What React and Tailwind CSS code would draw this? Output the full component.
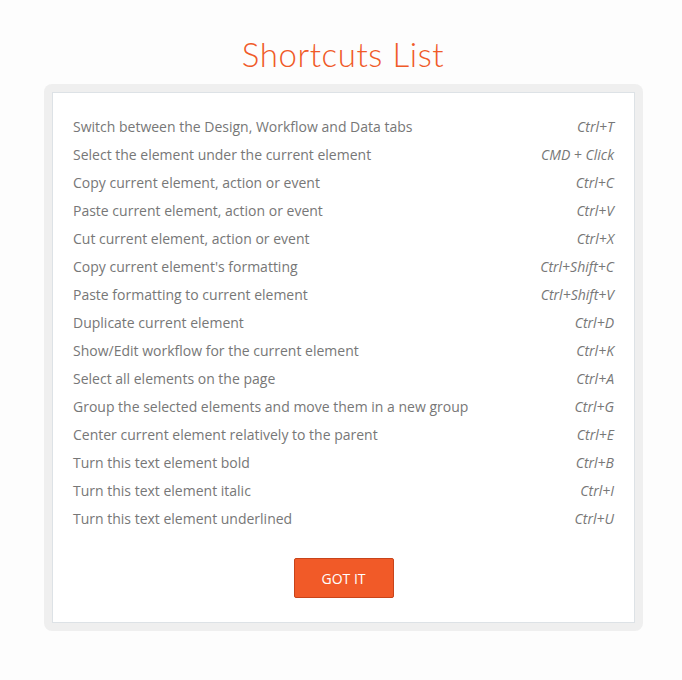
import React from 'react';

const shortcuts = [
  ['Switch between the Design, Workflow and Data tabs', 'Ctrl+T'],
  ['Select the element under the current element', 'CMD + Click'],
  ['Copy current element, action or event', 'Ctrl+C'],
  ['Paste current element, action or event', 'Ctrl+V'],
  ['Cut current element, action or event', 'Ctrl+X'],
  ["Copy current element's formatting", 'Ctrl+Shift+C'],
  ['Paste formatting to current element', 'Ctrl+Shift+V'],
  ['Duplicate current element', 'Ctrl+D'],
  ['Show/Edit workflow for the current element', 'Ctrl+K'],
  ['Select all elements on the page', 'Ctrl+A'],
  ['Group the selected elements and move them in a new group', 'Ctrl+G'],
  ['Center current element relatively to the parent', 'Ctrl+E'],
  ['Turn this text element bold', 'Ctrl+B'],
  ['Turn this text element italic', 'Ctrl+I'],
  ['Turn this text element underlined', 'Ctrl+U'],
];

const App = () => {
  return (
    <div className="min-h-[680px] w-[682px] bg-[#fdfdfd] pt-[34px] font-['Open_Sans',sans-serif]">
      {/* Title */}
      <h1 className="text-center font-['Lato',sans-serif] font-light text-[33px] leading-[40px] text-[#f05a28] tracking-[0.6px] pl-[4px]">
        Shortcuts List
      </h1>

      {/* Panel */}
      <div className="mx-[44px] mt-[10px] w-[599px] rounded-[8px] bg-[#efefef] p-[8px]">
        <div className="border border-[#dde2e6] bg-white px-[20px] pt-[19px] pb-[24px]">
          <ul>
            {shortcuts.map(([label, keys]) => (
              <li key={label} className="flex h-[28px] items-center justify-between text-[14px] text-[#777777]">
                <span>{label}</span>
                <span className="italic">{keys}</span>
              </li>
            ))}
          </ul>
          <div className="mt-[26px] flex justify-center">
            <button className="h-[40px] w-[100px] rounded-[2px] border border-[#c8441a] bg-[#f15a28] text-[14px] text-white">
              GOT IT
            </button>
          </div>
        </div>
      </div>
    </div>
  );
};

export default App;
